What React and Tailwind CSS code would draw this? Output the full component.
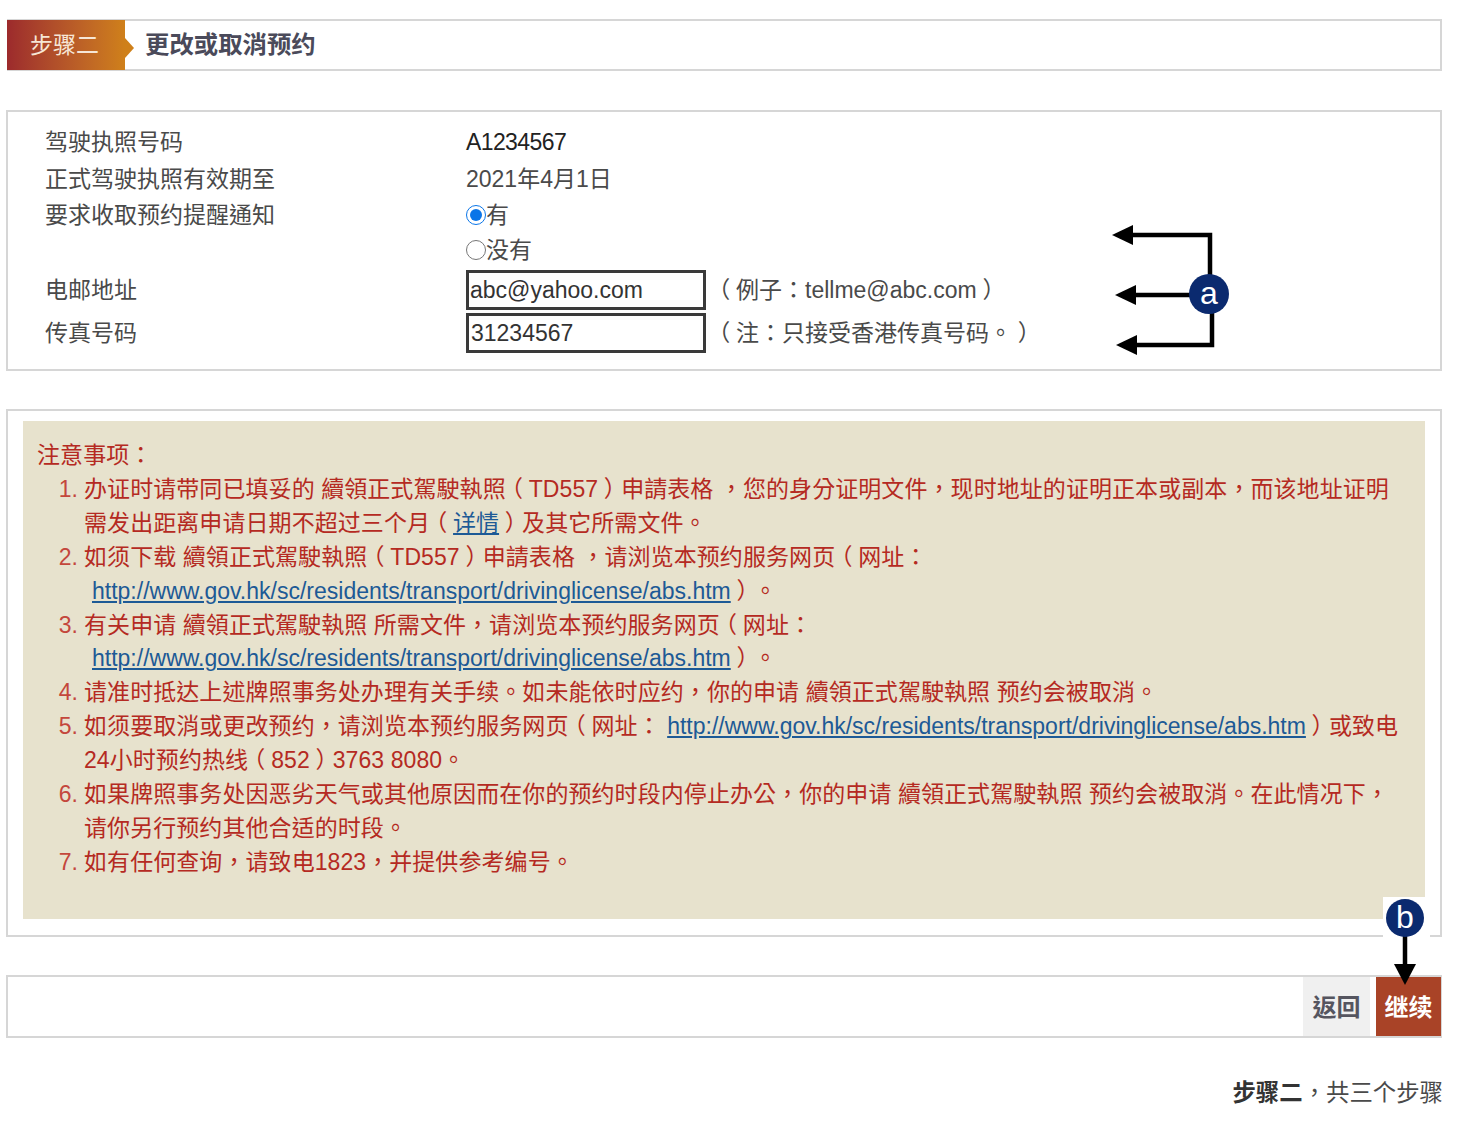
const FONT = "font-['Liberation_Sans','Noto_Sans_CJK_TC',sans-serif]";

// the reference's full-width brackets sit in the middle of their em box
const Open = () => <span className="inline-block w-[23px] text-center [font-feature-settings:'halt']">（</span>;
const Close = () => <span className="inline-block w-[23px] text-center [font-feature-settings:'halt']">）</span>;

const Link = ({ children }) => (
  <a className="text-[#1d5a96] underline tracking-normal" href="#">{children}</a>
);

const ABS_URL = "http://www.gov.hk/sc/residents/transport/drivinglicense/abs.htm";

const notes = [
  {
    n: "1.",
    lines: [
      <>办证时请带同已填妥的 續領正式駕駛執照<Open />TD557<Close />申請表格 ，您的身分证明文件，现时地址的证明正本或副本，而该地址证明</>,
      <>需发出距离申请日期不超过三个月<Open /><Link>详情</Link><Close />及其它所需文件。</>,
    ],
  },
  {
    n: "2.",
    lines: [
      <>如须下载 續領正式駕駛執照<Open />TD557<Close />申請表格 ，请浏览本预约服务网页<Open />网址：</>,
      <span className="pl-2"><Link>{ABS_URL}</Link><Close />。</span>,
    ],
  },
  {
    n: "3.",
    lines: [
      <>有关申请 續領正式駕駛執照 所需文件，请浏览本预约服务网页<Open />网址：</>,
      <span className="pl-2"><Link>{ABS_URL}</Link><Close />。</span>,
    ],
  },
  { n: "4.", lines: [<>请准时抵达上述牌照事务处办理有关手续。如未能依时应约，你的申请 續領正式駕駛執照 预约会被取消。</>] },
  {
    n: "5.",
    lines: [
      <>如须要取消或更改预约，请浏览本预约服务网页<Open />网址： <Link>{ABS_URL}</Link><Close />或致电</>,
      <>24小时预约热线<Open />852<Close />3763 8080。</>,
    ],
  },
  {
    n: "6.",
    lines: [
      <>如果牌照事务处因恶劣天气或其他原因而在你的预约时段内停止办公，你的申请 續領正式駕駛執照 预约会被取消。在此情况下，</>,
      <>请你另行预约其他合适的时段。</>,
    ],
  },
  { n: "7.", lines: [<>如有任何查询，请致电1823，并提供参考编号。</>] },
];

const Row = ({ label, children, className = "" }) => (
  <div className={`flex items-center ${className}`}>
    <div className="w-[421px] shrink-0">{label}</div>
    {children}
  </div>
);

const Badge = ({ letter, className }) => (
  <div className={`absolute rounded-full bg-[#0b2a6f] text-white flex items-center justify-center text-[32px] leading-none pb-[2px] ${className}`}>
    {letter}
  </div>
);

export default function App() {
  return (
    <div className={`relative w-[1461px] h-[1127px] bg-white pl-[6px] pr-[19px] pt-[19px] text-[23px] text-[#4a4a4a] overflow-hidden [text-spacing-trim:space-all] ${FONT}`}>
      {/* Step header */}
      <div className="ml-px h-[52px] border-2 border-l-0 border-[#d6d6d6] flex items-center">
        <div className="relative w-[118px] h-[50px] bg-gradient-to-r from-[#9c2a2c] to-[#cf801a] text-[#f6e6d6] pl-[23px] flex items-center">
          步骤二
          <div className="absolute left-full top-[18px] border-y-[10px] border-y-transparent border-l-[9px] border-l-[#cf801a]" />
        </div>
        <div className="ml-[20px] text-[24.4px] font-bold text-[#4a4a5a]">更改或取消预约</div>
      </div>

      {/* Licence details */}
      <div className="mt-[39px] h-[261px] border-2 border-[#d6d6d6] pl-[37px] pt-[12px]">
        <Row label="驾驶执照号码" className="h-[37px]"><span className="tracking-[-0.6px] text-[#222]">A1234567</span></Row>
        <Row label="正式驾驶执照有效期至" className="h-[37px]"><span>2021年4月1日</span></Row>
        <Row label="要求收取预约提醒通知" className="h-[34px]">
          <label className="flex items-center">
            <input type="radio" name="remind" defaultChecked className="w-[20px] h-[20px] m-0 accent-[#0a75e8]" />
            <span>有</span>
          </label>
        </Row>
        <Row label="" className="h-[36px]">
          <label className="flex items-center">
            <input type="radio" name="remind" className="w-[20px] h-[20px] m-0" />
            <span>没有</span>
          </label>
        </Row>
        <Row label="电邮地址" className="h-[44px]">
          <input readOnly value="abc@yahoo.com" className="w-[240px] h-[40px] shrink-0 border-[3px] border-[#3a3a3a] bg-white px-[1px] text-[#333] outline-none" />
          <span className="ml-[7px] whitespace-nowrap"><Open />例子：tellme@abc.com<Close /></span>
        </Row>
        <Row label="传真号码" className="h-[42px]">
          <input readOnly value="31234567" className="w-[240px] h-[40px] shrink-0 border-[3px] border-[#3a3a3a] bg-white px-[2px] text-[#333] outline-none" />
          <span className="ml-[7px] whitespace-nowrap"><Open />注：只接受香港传真号码。<Close /></span>
        </Row>
      </div>

      {/* Notes */}
      <div className="mt-[38px] h-[528px] border-2 border-[#d6d6d6] pt-[10px] pl-[15px] pr-[15px]">
        <div className="h-[498px] bg-[#e7e2cd] text-[#b52a22] pl-[14px] pt-[18px] leading-[33.9px] tracking-[0.07px] whitespace-nowrap">
          <div>注意事项：</div>
          <ol>
            {notes.map((note) => (
              <li key={note.n} className="flex">
                <span className="w-[47px] shrink-0 pr-[6px] text-right text-[#c4473c]">{note.n}</span>
                <div>
                  {note.lines.map((line, i) => (
                    <div key={i}>{line}</div>
                  ))}
                </div>
              </li>
            ))}
          </ol>
        </div>
      </div>

      {/* Actions */}
      <div className="mt-[38px] h-[63px] border-2 border-[#d6d6d6] flex justify-end">
        <button className="w-[67px] pt-[2px] bg-[#f0f0f0] text-[24px] font-bold text-[#55555f]">返回</button>
        <button className="ml-[6px] -mr-px w-[65px] pt-[2px] bg-[#a94327] text-[24px] font-bold text-white">继续</button>
      </div>

      <div className="mt-[38px] text-right -mr-[1px] text-[23.4px]">
        <span className="font-bold text-[#333]">步骤二</span>，共三个步骤
      </div>

      {/* Annotations */}
      <div className="absolute left-[1383px] top-[897px] w-[47px] h-[41px] bg-white" />
      <svg className="absolute inset-0 pointer-events-none" width="1461" height="1127" viewBox="0 0 1461 1127" fill="none">
        <path d="M1130 235H1210V276" stroke="#000" strokeWidth="4.5" />
        <path d="M1112 235L1133 225V245Z" fill="#000" />
        <path d="M1132 295H1192" stroke="#000" strokeWidth="4.5" />
        <path d="M1115 295L1136 285V305Z" fill="#000" />
        <path d="M1134 345H1212V312" stroke="#000" strokeWidth="4.5" />
        <path d="M1116 345L1137 335V355Z" fill="#000" />
        <path d="M1405 935V966" stroke="#000" strokeWidth="4.5" />
        <path d="M1405 985L1394 964H1416Z" fill="#000" />
      </svg>
      <Badge letter="a" className="left-[1189px] top-[274px] w-[40px] h-[40px]" />
      <Badge letter="b" className="left-[1386px] top-[899px] w-[38px] h-[38px]" />
    </div>
  );
}
